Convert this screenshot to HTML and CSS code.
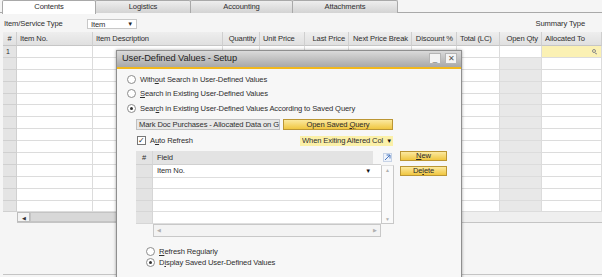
FILE: index.html
```html
<!DOCTYPE html>
<html lang="en">
<head>
  <meta charset="UTF-8" />
  <title>User-Defined Values - Setup</title>
  <link rel="stylesheet" href="styles.css">
</head>
<body>

  <div class="tabs">
    <div class="tab activa t1">Contents</div>
    <div class="tab t2">Logistics</div>
    <div class="tab t3">Accounting</div>
    <div class="tab t4">Attachments</div>
  </div>

  <div class="tipo">
    <span class="tipo-label">Item/Service Type</span>
    <div class="combo">Item<span class="flecha">&#9660;</span></div>
    <span class="resumen">Summary Type</span>
  </div>

  <div class="tabla" id="tabla">
    <div class="cab">#</div>
    <div class="cab">Item No.</div>
    <div class="cab">Item Description</div>
    <div class="cab der">Quantity</div>
    <div class="cab">Unit Price</div>
    <div class="cab der">Last Price</div>
    <div class="cab der">Next Price Break</div>
    <div class="cab der">Discount %</div>
    <div class="cab">Total (LC)</div>
    <div class="cab der">Open Qty</div>
    <div class="cab">Allocated To</div>
  </div>

  <div class="hscroll">
    <div class="hs-btn">&#9664;</div>
    <div class="hs-thumb"></div>
  </div>
  <div class="pie"></div>

  <!-- ventana flotante -->
  <div class="dialogo">
    <div class="titulo">
      <span>User-Defined Values - Setup</span>
      <div class="tit-btns">
        <div class="tbtn">_</div>
        <div class="tbtn">&#10005;</div>
      </div>
    </div>
    <div class="cuerpo">
      <div class="opcion"><span class="radio"></span>With<u>o</u>ut Search in User-Defined Values</div>
      <div class="opcion"><span class="radio"></span><u>S</u>earch in Existing User-Defined Values</div>
      <div class="opcion"><span class="radio sel"></span>Sear<u>c</u>h in Existing User-Defined Values According to Saved Query</div>

      <div class="consulta">
        <div class="caja">Mark Doc Purchases - Allocated Data on G</div>
        <div class="boton b-open">Open Saved <u>Q</u>uery</div>
      </div>

      <div class="auto">
        <span class="check">&#10003;</span>
        <span class="auto-txt">A<u>u</u>to Refresh</span>
        <div class="combo-am"><span class="combo-txt">When Exiting Altered Col</span><span class="flecha-n">&#9660;</span></div>
      </div>

      <div class="campos">
        <div class="bloque">
          <div class="fg" id="fg">
            <div class="fg-cab fg-num">#</div>
            <div class="fg-cab fg-campo"><span>Field</span></div>
            <div class="fg-icono">
              <svg width="9" height="9" viewBox="0 0 9 9"><rect x="0.5" y="0.5" width="8" height="8" fill="#eef3fb" stroke="#c7d3e6"/><path d="M2 7 L7 2 M3.5 2 H7 V5.5" stroke="#4a78c0" stroke-width="1" fill="none"/></svg>
            </div>
          </div>
          <div class="fg-hs">
            <div class="fg-hs-izq">&#9664;</div>
            <div class="fg-hs-der">&#9654;</div>
          </div>
        </div>
        <div class="botones">
          <div class="boton b-peq"><u>N</u>ew</div>
          <div class="boton b-peq">De<u>l</u>ete</div>
        </div>
      </div>

      <div class="abajo">
        <div class="opcion"><span class="radio"></span><u>R</u>efresh Regularly</div>
        <div class="opcion"><span class="radio sel"></span>D<u>i</u>splay Saved User-Defined Values</div>
      </div>
    </div>
  </div>

  <script>
    // filas de la tabla principal
    function generarFilas() {
      const tabla = document.getElementById("tabla");
      for (let i = 0; i < 14; i++) {
        for (let c = 0; c < 11; c++) {
          const celda = document.createElement("div");
          celda.className = "celda";
          if (c === 0) {
            celda.classList.add("num");
            if (i === 0) celda.textContent = "1";
          }
          if (c === 9 && i > 0) celda.classList.add("gris");
          if (c === 10 && i === 0) {
            celda.classList.add("amarilla");
            celda.innerHTML = '<span class="lupa"></span>';
          }
          tabla.appendChild(celda);
        }
      }

      const fg = document.getElementById("fg");
      for (let i = 0; i < 5; i++) {
        const n = document.createElement("div");
        n.className = "fg-celda fg-num";
        const f = document.createElement("div");
        f.className = "fg-celda";
        if (i === 0) {
          f.classList.add("primera");
          f.innerHTML = 'Item No.<span class="flecha-n">&#9660;</span>';
        }
        fg.appendChild(n);
        fg.appendChild(f);
      }
      const vs = document.createElement("div");
      vs.className = "fg-vs";
      vs.innerHTML = '<span class="vs-arr">&#9650;</span><span class="vs-arr">&#9660;</span>';
      fg.appendChild(vs);
    }

    window.onload = () => {
      generarFilas();
    };
  </script>
</body>
</html>
```

FILE: styles.css
```css
* {
  box-sizing: border-box;
}

body {
  margin: 0;
  width: 602px;
  height: 277px;
  overflow: hidden;
  position: relative;
  background: #f5f5f5;
  font-family: "Liberation Sans", Arial, sans-serif;
  font-size: 7.6px;
  letter-spacing: -0.12px;
  color: #2e2e2e;
}

u {
  text-decoration: underline;
  text-underline-offset: 1px;
}

/* pestañas */
.tabs {
  display: flex;
  height: 13px;
  padding-left: 2px;
  border-bottom: 1px solid #a9a9a9;
}

.tab {
  height: 13px;
  line-height: 12px;
  text-align: center;
  border: 1px solid #a9a9a9;
  border-bottom: none;
  border-radius: 2px 2px 0 0;
  background: linear-gradient(#eeeeee, #d3d3d3);
  margin-left: -1px;
}

.tab.activa {
  background: #fff;
  height: 14px;
  margin-left: 0;
}

.t1 { width: 94px; }
.t2 { width: 96px; }
.t3 { width: 103px; }
.t4 { width: 106px; }

/* tipo */
.tipo {
  display: flex;
  align-items: center;
  height: 19px;
  padding: 2px 17px 0 4px;
}

.tipo-label {
  width: 83px;
}

.combo {
  position: relative;
  width: 50px;
  height: 10px;
  line-height: 9px;
  padding-left: 3px;
  background: #fff;
  border: 1px solid #c8c8c8;
}

.flecha {
  position: absolute;
  right: 3px;
  top: 0;
  font-size: 6px;
  color: #222;
}

.resumen {
  margin-left: auto;
}

/* tabla principal */
.tabla {
  margin-left: 3px;
  display: grid;
  grid-template-columns: 14px 76px 130px 37px 45px 44px 63px 45px 43px 42px 60px;
  grid-template-rows: 14px;
  grid-auto-rows: 11.9px;
  background: #fff;
}

.cab {
  background: linear-gradient(#eeeeee, #e0e0e0);
  border-right: 1px solid #cfcfcf;
  border-bottom: 1px solid #c6c6c6;
  line-height: 13px;
  padding: 0 3px;
  white-space: nowrap;
  overflow: hidden;
}

.cab:first-child {
  text-align: center;
  padding: 0;
}

.cab.der {
  text-align: right;
}

.celda {
  border-right: 1px solid #dcdcdc;
  border-bottom: 1px solid #dcdcdc;
  background: #fff;
}

.celda.num {
  background: #e4e4e4;
  border-color: #d0d0d0;
  padding-left: 3px;
  line-height: 11px;
  font-size: 7px;
}

.celda.gris {
  background: #e8e8e8;
}

.celda.amarilla {
  background: #fbf1b4;
  position: relative;
}

.lupa {
  position: absolute;
  right: 5px;
  top: 3px;
  width: 4px;
  height: 4px;
  border: 1px solid #8a8a8a;
  border-radius: 50%;
}

.lupa::after {
  content: "";
  position: absolute;
  left: 2px;
  top: 3px;
  width: 2px;
  height: 1px;
  background: #8a8a8a;
  transform: rotate(45deg);
}

.hscroll {
  display: flex;
  margin-left: 17px;
  height: 11px;
  border-bottom: 1px solid #c4c4c4;
  background: #efefef;
}

.hs-btn {
  width: 13px;
  font-size: 5px;
  line-height: 10px;
  text-align: center;
  color: #333;
  background: #f4f4f4;
  border: 1px solid #bdbdbd;
}

.hs-thumb {
  width: 160px;
  background: #d8d8d8;
  border: 1px solid #c4c4c4;
}

.pie {
  height: 52px;
  margin-left: 3px;
  border-bottom: 1px solid #c4c4c4;
}

/* dialogo */
.dialogo {
  position: absolute;
  left: 116px;
  top: 50px;
  width: 346px;
  height: 240px;
  background: #f7f7f7;
  border: 1px solid #8f8f8f;
  box-shadow: 0 0 3px rgba(0, 0, 0, 0.35);
}

.titulo {
  display: flex;
  align-items: center;
  height: 18px;
  padding: 0 4px 2px 5px;
  background: linear-gradient(#dadada, #a8a8a8);
  border-bottom: 2px solid #f2b81c;
  font-size: 9.3px;
  letter-spacing: -0.1px;
  color: #1e1e1e;
}

.tit-btns {
  margin-left: auto;
  display: flex;
  gap: 4px;
}

.tbtn {
  width: 12px;
  height: 11px;
  line-height: 9px;
  text-align: center;
  font-size: 8px;
  color: #555;
  background: #f4f4f4;
  border: 1px solid #b5b5b5;
}

.cuerpo {
  padding: 3px 0 0 10px;
}

.opcion {
  display: flex;
  align-items: center;
  height: 14.5px;
}

.radio {
  width: 9px;
  height: 9px;
  margin-right: 4px;
  border: 1px solid #8c8c8c;
  border-radius: 50%;
  background: #fff;
  position: relative;
}

.radio.sel::after {
  content: "";
  position: absolute;
  left: 2px;
  top: 2px;
  width: 3px;
  height: 3px;
  border-radius: 50%;
  background: #333;
}

.consulta {
  display: flex;
  margin: 3px 0 0 9px;
  height: 11px;
}

.caja {
  width: 144px;
  height: 11px;
  line-height: 10px;
  padding-left: 2px;
  background: #e7e7e7;
  border: 1px solid #c0c0c0;
  white-space: nowrap;
  overflow: hidden;
}

.boton {
  text-align: center;
  background: linear-gradient(#fbe9a0, #f0c640);
  border: 1px solid #bb9634;
  color: #2a2a2a;
}

.b-open {
  width: 110px;
  line-height: 9px;
  margin-left: 3px;
}

.auto {
  display: flex;
  align-items: center;
  margin: 6px 0 0 10px;
  height: 10px;
}

.check {
  width: 9px;
  height: 9px;
  font-size: 8px;
  line-height: 8px;
  text-align: center;
  background: #fff;
  border: 1px solid #777;
}

.auto-txt {
  margin-left: 4px;
}

.combo-am {
  display: flex;
  margin-left: auto;
  margin-right: 68px;
  width: 93px;
  height: 10px;
  line-height: 10px;
  padding: 0 1px 0 2px;
  background: #fbf0a8;
  white-space: nowrap;
}

.combo-txt {
  flex: 1;
  overflow: hidden;
}

.flecha-n {
  font-size: 6px;
  color: #111;
}

/* rejilla de campos */
.campos {
  display: flex;
  margin: 5px 0 0 9px;
}

.fg {
  display: grid;
  grid-template-columns: 17px 228px 13px;
  grid-template-rows: 14px 13px repeat(4, 11.5px);
}

.fg-cab {
  background: #e3e3e3;
  border-bottom: 1px solid #d0d0d0;
  line-height: 13px;
}

.fg-num {
  background: #e3e3e3;
  text-align: center;
  border-right: 1px solid #d6d6d6;
}

.fg-campo {
  background: transparent;
}

.fg-campo span {
  display: block;
  width: 220px;
  height: 13px;
  padding-left: 4px;
  background: #e3e3e3;
}

.fg-icono {
  padding: 2px 0 0 2px;
}

.fg-celda {
  background: #fff;
  border-bottom: 1px solid #dedede;
  position: relative;
}

.fg-celda.fg-num {
  background: #e3e3e3;
  border-bottom-color: #d6d6d6;
}

.fg-celda.primera {
  line-height: 12px;
  padding-left: 4px;
}

.fg-celda.primera .flecha-n {
  position: absolute;
  right: 10px;
  top: 0;
}

.fg-vs {
  grid-column: 3;
  grid-row: 2 / 7;
  display: flex;
  flex-direction: column;
  justify-content: space-between;
  align-items: center;
  background: #fafafa;
  border: 1px solid #c8c8c8;
  border-top-color: #e0e0e0;
}

.vs-arr {
  font-size: 5px;
  color: #b0b0b0;
  line-height: 8px;
}

.fg-hs {
  display: flex;
  justify-content: space-between;
  margin-left: 17px;
  width: 228px;
  height: 13px;
  background: #f3f3f3;
  border: 1px solid #c8c8c8;
  font-size: 5px;
  color: #b0b0b0;
  line-height: 11px;
  padding: 0 3px;
}

.botones {
  display: flex;
  flex-direction: column;
  gap: 5px;
  margin-left: 6px;
}

.b-peq {
  width: 47px;
  height: 10px;
  line-height: 8px;
}

.abajo {
  margin: 9px 0 0 19px;
}

.abajo .opcion {
  height: 11px;
}
```
